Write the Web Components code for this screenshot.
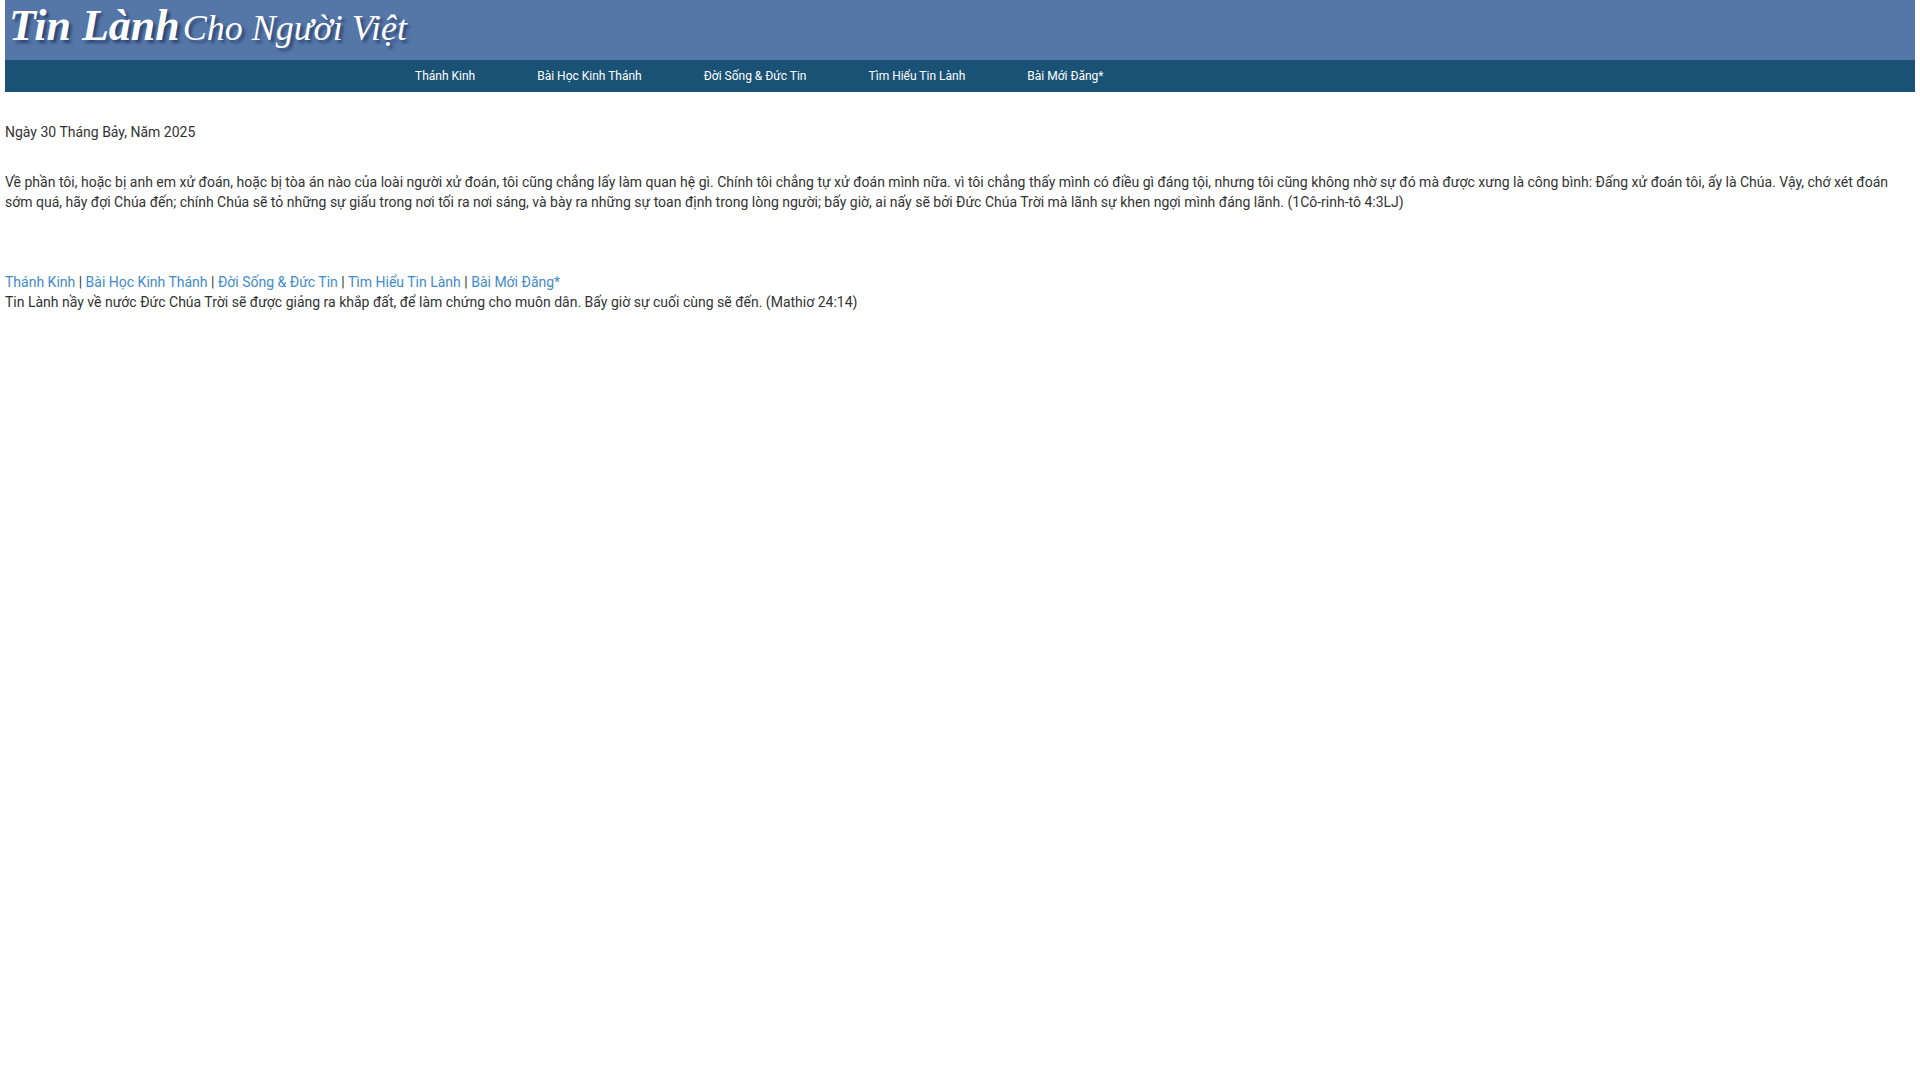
<!DOCTYPE html>
<html lang="vi">
<head>
<meta charset="utf-8">
<title>Tin Lành Cho Người Việt</title>
<style>
body { margin: 0; padding: 0 5px; background: #fff; color: #333; font: 14px/20px Roboto, sans-serif; }
</style>
</head>
<body>
<site-page>
  <site-banner slot="top"><span slot="first">Tin Lành</span><span slot="second">Cho Người Việt</span></site-banner>
  <site-nav slot="top"></site-nav>
  <p-block>Ngày 30 Tháng Bảy, Năm 2025</p-block>
  <p-block>Về phần tôi, hoặc bị anh em xử đoán, hoặc bị tòa án nào của loài người xử đoán, tôi cũng chẳng lấy làm quan hệ gì. Chính tôi chẳng tự xử đoán mình nữa. vì tôi chẳng thấy mình có điều gì đáng tội, nhưng tôi cũng không nhờ sự đó mà được xưng là công bình: Đấng xử đoán tôi, ấy là Chúa. Vậy, chớ xét đoán sớm quá, hãy đợi Chúa đến; chính Chúa sẽ tỏ những sự giấu trong nơi tối ra nơi sáng, và bày ra những sự toan định trong lòng người; bấy giờ, ai nấy sẽ bởi Đức Chúa Trời mà lãnh sự khen ngợi mình đáng lãnh. (1Cô-rinh-tô 4:3LJ)</p-block>
  <site-footer slot="bottom">Tin Lành nầy về nước Đức Chúa Trời sẽ được giảng ra khắp đất, để làm chứng cho muôn dân. Bấy giờ sự cuối cùng sẽ đến. (Mathiơ 24:14)</site-footer>
</site-page>
<script>
const LINKS = ['Thánh Kinh', 'Bài Học Kinh Thánh', 'Đời Sống &amp; Đức Tin', 'Tìm Hiểu Tin Lành', 'Bài Mới Đăng*'];

class Base extends HTMLElement {
  constructor() {
    super();
    this.attachShadow({ mode: 'open' }).innerHTML = this.template();
  }
}

customElements.define('site-page', class extends Base {
  template() {
    return `<style>
      :host { display: block; }
      main { display: flex; flex-direction: column; gap: 30px; padding: 30px 0 60px; }
    </style>
    <slot name="top"></slot><main><slot></slot></main><slot name="bottom"></slot>`;
  }
});

customElements.define('site-banner', class extends Base {
  template() {
    return `<style>
      :host { display: block; background: #5577a8; }
      h1 { display: flex; align-items: baseline; gap: 3px; height: 60px; box-sizing: border-box; margin: 0;
        padding: 0 4px; color: #fff; font: italic 36px/52px "Liberation Serif", serif;
        text-shadow: 3px 3px 3px #2c4774; white-space: nowrap; }
      .first { font-size: 44px; font-weight: bold; }
    </style>
    <h1><span class="first"><slot name="first"></slot></span><span><slot name="second"></slot></span></h1>`;
  }
});

customElements.define('site-nav', class extends Base {
  template() {
    return `<style>
      :host { display: block; background: #1a5276; }
      nav { display: flex; flex-wrap: wrap; gap: 62px; padding: 6px 0 6px 410px; }
      a { color: #fff; font-size: 12px; line-height: 20px; text-decoration: none; }
    </style>
    <nav>${LINKS.map(t => `<a href="#">${t}</a>`).join('')}</nav>`;
  }
});

customElements.define('p-block', class extends Base {
  template() {
    return `<style>:host { display: block; } p { margin: 0; }</style><p><slot></slot></p>`;
  }
});

customElements.define('site-footer', class extends Base {
  template() {
    return `<style>
      :host { display: block; }
      a { color: #428bca; text-decoration: none; }
      p { margin: 0; }
    </style>
    <footer><nav>${LINKS.map(t => `<a href="#">${t}</a>`).join(' | ')}</nav><p><slot></slot></p></footer>`;
  }
});
</script>
</body>
</html>
